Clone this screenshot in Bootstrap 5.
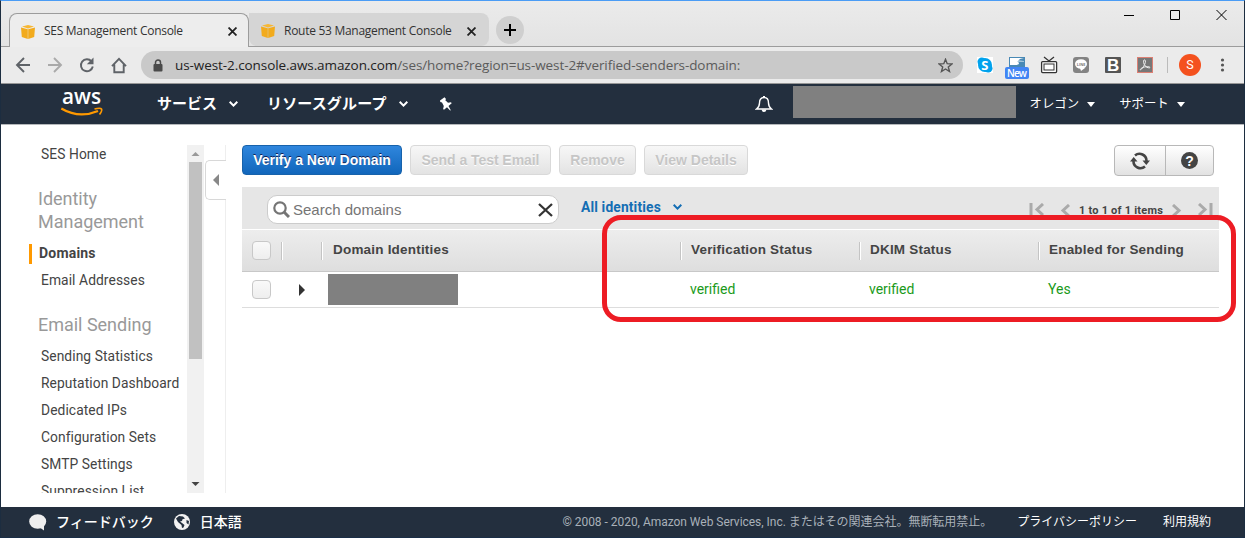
<!DOCTYPE html>
<html lang="ja">
<head>
<meta charset="utf-8">
<meta name="viewport" content="width=device-width, initial-scale=1">
<title>SES Management Console</title>
<link href="https://cdn.jsdelivr.net/npm/bootstrap@5.3.0/dist/css/bootstrap.min.css" rel="stylesheet">
<style>
body{width:1245px;height:538px;overflow:hidden;background:#fff;font-family:Roboto,"Noto Sans CJK JP",sans-serif;font-size:14px;color:#444;line-height:1.2;white-space:nowrap}
svg{display:block;flex:none}
.window{height:538px;border:1px solid #1c2d40;border-top-color:#4a9cf5;border-bottom-color:#1a2e47}
.seg{font-family:"Open Sans","Noto Sans",sans-serif}
.strip{height:46px;background:linear-gradient(#ebebeb,#e3e3e3);border-bottom:1px solid #9c9c9c;padding:12px 0 0 8px}
.tab{height:34px;width:240px;font-size:12px;color:#333;padding:0 11px 0 11px}
.tab.on{background:#ededed;border:1px solid #9c9c9c;border-bottom:0;border-radius:8px 8px 0 0;z-index:1;margin-bottom:-1px;padding-top:2px}
.tab.off{background:#d5d5d5;border-radius:0 8px 8px 8px;height:33px;padding-top:3px;padding-left:12px}
.newtab{width:28px;height:28px;background:#cfcfcf;margin:3px 0 0 7px}
.tools{height:37px;background:#ebebeb;border-bottom:1px solid #969696;padding-left:14px}
.omni{width:822px;height:28px;background:#c9c9c9;border-radius:14px;margin-left:13px;padding:0 10px 0 12px;font-size:13.500px;color:#222}
.omni .path{color:#5b5b5b}
.awsnav{height:41px;background:#232f3e;border-bottom:1px solid #b5b8bb;color:#fff}
.awsnav .big{font-size:15px;font-weight:700}
.masked{background:#808080}
.body{height:382px}
.side{width:158px;height:348px;overflow:hidden;margin-top:20px;margin-left:28px;padding-left:12px}
.side a{display:block;height:27px;line-height:27px;color:#444;text-decoration:none;font-size:13.800px;letter-spacing:.08px}
.side h2{font-size:18px;line-height:23px;color:#999;font-weight:400;margin:0 0 0 -3px;letter-spacing:-.02px}
.side a.cur{font-weight:700;margin-left:-12px;padding-left:10px;background:linear-gradient(#f90,#f90) 0 4px/3px 20px no-repeat;font-size:14px;letter-spacing:.2px}
.sbar{width:17px;height:348px;margin-top:20px;background:#f1f1f1}
.thumb{width:13px;height:197px;background:#c1c1c1}
.gutter{width:22px;height:348px;margin-top:20px;border-right:1px solid #eee}
.toggle{width:21px;height:40px;margin:15px 0 0 1px;border:1px solid #d8d8d8;border-right:0;border-radius:5px 0 0 5px;background:#fff}
.main{width:977px;margin:20px 0 0 16px;font-family:"Liberation Sans",sans-serif}
.abtn{height:30px;border:1px solid #d9d9d9;border-radius:4px;background:linear-gradient(#f7f7f7,#e3e3e3);color:#c6c6c6;font-weight:700;font-size:14px;padding:0;text-shadow:0 1px #fff;line-height:28px}
.abtn.pri{background:linear-gradient(#2f86dd,#1166bb);border-color:#1762ab;color:#fff;text-shadow:0 -1px #125}
.tgroup{width:100px;height:31px;border:1px solid #b8b8b8;border-radius:4px;background:linear-gradient(#fff,#e2e2e2);margin-right:5px}
.filter{height:43px;background:#e6e6e6;border-bottom:1px solid #fff;margin-top:11px}
.sbox{width:292px;height:29px;margin:8px 0 0 25px;background:#fff;border:1px solid #ccc;border-radius:10px;font-size:15px;color:#757575;padding:0 5px}
.ghead{height:42px;background:linear-gradient(#ededed,#dedede);border-bottom:1px solid #c8c8c8;font-weight:700;font-size:13.500px;color:#444;letter-spacing:.2px}
.ghead span{padding-bottom:1px}
.ghead .sep{width:2px;height:18px;border-left:1px solid #c4c4c4;border-right:1px solid #fff}
.grow{height:36px;border-bottom:1px solid #ddd;font-family:Roboto,sans-serif;color:#1a9a1a;font-size:14px}
.cbx{width:19px;height:19px;border:1px solid #c8c8c8;border-radius:4px;background:linear-gradient(#f9f9f9,#eee);margin-left:10px}
.w179{width:179px}
.pager{font:700 11px Roboto,sans-serif;color:#444}
.foot{height:30px;background:#232f3e;color:#fff;font-size:13px}
.foot .copy{color:#a9b1b9;font-size:12px;letter-spacing:-.03px}
.callout{position:absolute;left:602px;top:215px;width:634px;height:107px;border:5px solid #ed1c24;border-radius:19px}
</style>
</head>
<body>
<svg width="0" height="0" style="position:absolute">
<symbol id="cube" viewBox="0 0 14 14"><path d="M0 2.600 6.800 4.200V14L.8 12zM14 2.600 7.200 4.200V14L13.200 12z" fill="#f2ab1d"/><path d="M1 1.600 7 0l6 1.600L7 3.400z" fill="#f7b733"/></symbol>
<symbol id="ex" viewBox="0 0 8 8"><path d="m.5.5 7 7m0-7-7 7" stroke="#222" stroke-width="1.600"/></symbol>
<symbol id="chev" viewBox="0 0 9 6"><path d="m.7.8 3.800 3.800L8.300.8" fill="none" stroke="currentColor" stroke-width="2"/></symbol>
<symbol id="pg" viewBox="0 0 10 13"><path d="M9 1 3 6.500l6 5.500" fill="none" stroke="#aaa" stroke-width="3"/></symbol>
</svg>
<div class="window d-flex flex-column">
<div class="strip d-flex align-items-start seg">
  <div class="tab on d-flex align-items-center position-relative"><svg width="14" height="14"><use href="#cube"/></svg><span style="margin-left:9px;letter-spacing:-.29px">SES Management Console</span><svg class="ms-auto" width="9" height="9"><use href="#ex"/></svg></div>
  <div class="tab off d-flex align-items-center"><svg width="14" height="14"><use href="#cube"/></svg><span style="margin-left:9px;letter-spacing:-.28px">Route 53 Management Console</span><svg class="ms-auto" width="9" height="9" style="margin-right:2px"><use href="#ex"/></svg></div>
  <div class="newtab rounded-circle d-flex align-items-center justify-content-center"><svg width="12" height="12"><path d="M6 0v12M0 6h12" stroke="#000" stroke-width="2"/></svg></div>
  <svg class="ms-auto" width="103" height="12" style="margin:-4px 17px 0 0" fill="none" stroke="#000"><path d="M0 6.500h10M46.500 1.500h9v9h-9zM92.500 1l10 10m0-10-10 10"/></svg>
</div>
<div class="tools d-flex align-items-center seg">
  <svg width="113" height="18" fill="none" stroke-width="1.900"><path d="M15 9H2m7-7L2 9l7 7" stroke="#5f6368"/><path d="M33 9h13m-7-7 7 7-7 7" stroke="#aaa"/><path d="M76.500 5.300A6 6 0 1 0 77.800 10.500" stroke="#5f6368"/><path d="M78.500 1.500v6.700h-6.700z" fill="#5f6368"/><path d="M97 10.200 104 2.800l7 7.400M99.300 8.500v7.700h9.400V8.500" stroke="#5f6368"/></svg>
  <div class="omni d-flex align-items-center"><svg width="10" height="13"><rect y="5" x="0.500" width="9" height="7.500" rx="1" fill="#4a4a4a"/><path d="M2.500 6V3.500a2.500 2.500 0 0 1 5 0V6" fill="none" stroke="#4a4a4a" stroke-width="1.500"/></svg><span style="margin-left:12px;letter-spacing:-.08px">us-west-2.console.aws.amazon.com<span class="path">/ses/home?region=us-west-2#verified-senders-domain:</span></span><svg class="ms-auto" width="15" height="15" viewBox="0 0 15 15"><path d="m7.500 1.300 1.700 4.400 4.800.3-3.700 3 1.200 4.500-4-2.500-4 2.500L4.700 9 1 6l4.800-.3z" fill="none" stroke="#555" stroke-width="1.400"/></svg></div>
  <svg width="262" height="36" viewBox="963 47 262 36" class="seg">
    <rect x="977" y="57" width="16" height="16" fill="#fff"/><circle cx="981.800" cy="61.800" r="4.300" fill="#00a2ed"/><circle cx="988.200" cy="68.200" r="4.300" fill="#00a2ed"/><circle cx="985" cy="65" r="7" fill="#00a2ed"/><text x="981.200" y="69.700" font-size="13" font-weight="700" fill="#fff">S</text>
    <rect x="1009.500" y="57.500" width="15" height="12" fill="#fff" stroke="#4989b5"/><path d="M1010 65h5q4 0 4-1.500t-2-2h7.500V70h-14.500zM1018 60.500q2-2.500 6-2.500v3z" fill="#4989b5"/><rect x="1005" y="67" width="24" height="12" rx="2" fill="#4285f4"/><text x="1007" y="76.700" font-size="10" font-weight="600" fill="#fff" textLength="20">New</text>
    <path d="m1044 57 5 4 5-4" fill="none" stroke="#333" stroke-width="1.300"/><rect x="1041.600" y="61.600" width="15" height="11" rx="1" fill="#fff" stroke="#333" stroke-width="1.300"/><rect x="1044" y="64" width="10" height="6" fill="#fff" stroke="#333"/>
    <rect x="1073" y="57" width="16" height="16" rx="3" fill="#838383"/><ellipse cx="1081" cy="64" rx="6" ry="4.800" fill="#fff"/><path d="M1080 68h5l-4 3z" fill="#fff"/><text x="1076.800" y="65.600" font-size="3.800" font-weight="700" fill="#777">LINE</text>
    <rect x="1105" y="57" width="16" height="16" rx="1" fill="#555"/><text x="1107" y="71" font-size="17" font-weight="700" fill="#fff" font-family="Liberation Sans">B</text>
    <rect x="1137.500" y="57.500" width="15" height="15" fill="#777" stroke="#dc7f73"/><path d="M1144 60c2-1 2 3-.5 6.500-2 3.500-4 4-3 2.500 1.500-2 7-3 9-2s-2 1.500-4-.8c-2-2-2.500-5.200-1.500-6.200z" fill="none" stroke="#eee"/>
    <path d="M1167.500 57v16" stroke="#bbb"/><circle cx="1190" cy="65" r="11" fill="#f4511e"/><text x="1186.300" y="69.300" font-size="12.500" fill="#fff" font-family="Roboto">S</text>
    <g fill="#555"><circle cx="1222.500" cy="60" r="1.600"/><circle cx="1222.500" cy="65" r="1.600"/><circle cx="1222.500" cy="70" r="1.600"/></g>
  </svg>
</div>
<nav class="awsnav d-flex align-items-center">
  <svg width="44" height="38" viewBox="60 85 44 38" style="margin-left:59px"><text x="62" y="103.500" font-family="Open Sans" font-size="21" font-weight="600" fill="#fff" textLength="39" lengthAdjust="spacingAndGlyphs">aws</text><path d="M61.300 108.500Q79 119 98 111" fill="none" stroke="#f90" stroke-width="2.200"/><path d="M94.500 109q6-1.500 7 0t-2 5.500" fill="none" stroke="#f90" stroke-width="1.700"/></svg>
  <span class="big" style="margin-left:53px">サービス</span><svg width="9" height="6" style="margin-left:12px"><use href="#chev"/></svg>
  <span class="big" style="margin-left:29px;letter-spacing:.15px">リソースグループ</span><svg width="9" height="6" style="margin-left:12px"><use href="#chev"/></svg>
  <svg width="14" height="14" viewBox="0 0 14 14" style="margin-left:31px"><path d="M1 3.500 5.500.300 7 2 6.300 3.300 9 5.700l3-.5.700 1.100-3.200 2.800 2.300 4.200-.7.200L8 10.300l-3 2.500-.9-.7.700-3.200L3 5.500 1.300 5z" fill="#fff"/></svg>
  <svg width="18" height="18" viewBox="0 0 18 18" style="margin-left:302px"><path d="M9 2.500c-3.500 0-4.500 2.500-4.500 5.500 0 3-1 4.500-3 6h15c-2-1.500-3-3-3-6 0-3-1-5.500-4.500-5.500z" fill="none" stroke="#fff" stroke-width="1.400"/><path d="M8 1h2v2H8zM6.500 14.500h5q-.5 2.500-2.500 2.500t-2.500-2.500z" fill="#fff"/></svg>
  <div class="masked" style="width:223px;height:32px;margin:-4px 0 0 20px"></div>
  <span style="margin-left:14px;font-size:12.400px">オレゴン</span><svg width="8" height="5" style="margin-left:8px"><path d="M0 0h8L4 5z" fill="#fff"/></svg>
  <span style="margin-left:24px;font-size:12.400px">サポート</span><svg width="8" height="5" style="margin-left:8px"><path d="M0 0h8L4 5z" fill="#fff"/></svg>
</nav>
<div class="body d-flex">
  <div class="side">
    <a style="height:42px;line-height:19px">SES Home</a>
    <h2>Identity<br>Management</h2>
    <a class="cur" style="margin-top:7px">Domains</a><a>Email Addresses</a>
    <h2 style="margin-top:19px;margin-bottom:7px">Email Sending</h2>
    <a>Sending Statistics</a><a>Reputation Dashboard</a><a>Dedicated IPs</a><a>Configuration Sets</a><a>SMTP Settings</a><a>Suppression List</a>
  </div>
  <div class="sbar d-flex flex-column align-items-center"><svg width="17" height="17"><path d="M4.500 11 8.500 7l4 4z" fill="#999"/></svg><div class="thumb"></div><svg class="mt-auto" width="17" height="17"><path d="m4.500 6 4 4 4-4z" fill="#444"/></svg></div>
  <div class="gutter"><div class="toggle d-flex align-items-center"><svg width="6" height="12" style="margin-left:7px"><path d="M6 0v12L0 6z" fill="#888"/></svg></div></div>
  <div class="main">
    <div class="d-flex">
      <button class="btn abtn pri" style="width:160px">Verify a New Domain</button>
      <button class="btn abtn ms-2" style="width:141px;letter-spacing:-.05px">Send a Test Email</button>
      <button class="btn abtn ms-2" style="width:77px">Remove</button>
      <button class="btn abtn ms-2" style="width:104px">View Details</button>
      <div class="tgroup d-flex ms-auto"><div class="d-flex align-items-center justify-content-center border-end" style="width:51px;border-color:#b8b8b8!important"><svg width="20" height="18" viewBox="0 0 20 18" fill="none" stroke="#444" stroke-width="2.600"><path d="M5 3.500A7 7 0 0 1 16.500 9M15 14.500A7 7 0 0 1 3.500 9"/><path d="M12.500 8.500h7.500l-3.700 4.500zM0 9.500h7.500L3.700 5z" fill="#444" stroke="none"/></svg></div>
      <div class="d-flex align-items-center justify-content-center flex-fill"><svg width="17" height="17"><circle cx="8.500" cy="8.500" r="8.500" fill="#444"/><text x="4.200" y="13.500" font-size="14" font-weight="700" fill="#fff">?</text></svg></div></div>
    </div>
    <div class="filter d-flex align-items-start">
      <div class="sbox d-flex align-items-center"><svg width="17" height="17"><circle cx="7" cy="7" r="5.700" fill="none" stroke="#757575" stroke-width="2.200"/><path d="m11 11 5 5" stroke="#757575" stroke-width="3"/></svg><span style="margin-left:3px">Search domains</span><svg class="ms-auto" width="15" height="14"><path d="m1 1 13 12m0-12L1 13" stroke="#333" stroke-width="2.300"/></svg></div>
      <span style="margin:12px 0 0 22px;font:700 13.800px Roboto,sans-serif;letter-spacing:.15px;color:#146eb4">All identities</span><svg width="9" height="6" style="margin:17px 0 0 12px;color:#146eb4"><use href="#chev"/></svg>
      <div class="pager ms-auto d-flex align-items-center" style="margin:16px 6px 0 0"><svg width="15" height="14"><path d="M2 0v14" stroke="#aaa" stroke-width="3"/><use href="#pg" x="5" width="10" height="13"/></svg><svg width="10" height="13" style="margin-left:16px"><use href="#pg"/></svg><span style="margin:0 9px;letter-spacing:.22px">1 to 1 of 1 items</span><svg width="10" height="13" style="transform:scaleX(-1)"><use href="#pg"/></svg><svg width="15" height="14" style="transform:scaleX(-1);margin-left:16px"><path d="M2 0v14" stroke="#aaa" stroke-width="3"/><use href="#pg" x="5" width="10" height="13"/></svg></div>
    </div>
    <div class="ghead d-flex align-items-center"><div class="cbx"></div><i class="sep" style="margin-left:10px"></i><i class="sep" style="margin-left:38px"></i><span style="margin-left:10px;width:347px">Domain Identities</span><i class="sep"></i><span style="padding-left:9px;width:177px">Verification Status</span><i class="sep"></i><span style="padding-left:9px;width:177px">DKIM Status</span><i class="sep"></i><span style="padding-left:9px">Enabled for Sending</span></div>
    <div class="grow d-flex align-items-center"><div class="cbx"></div><svg width="6" height="12" style="margin-left:28px"><path d="M0 0v12l6-6z" fill="#333"/></svg><div class="masked" style="width:130px;height:31px;margin:0 232px 0 23px"></div><span class="w179">verified</span><span class="w179">verified</span><span>Yes</span></div>
  </div>
</div>
<footer class="foot d-flex align-items-center">
  <svg width="18" height="17" style="margin-left:28px"><ellipse cx="8.700" cy="7.500" rx="8.500" ry="7.300" fill="#eee"/><path d="m10 13 5 3.500V11z" fill="#eee"/></svg><span style="margin-left:9px;font-size:14px;font-weight:500">フィードバック</span>
  <svg width="16" height="16" style="margin-left:20px"><circle cx="8" cy="8" r="8" fill="#f2f2f2"/><path d="M2 4.500 5 2l4 .500 2 2-2.500.800L8 7l-2 .5 2 1.500 2.500 2-1 2.500L8 14 7.500 11 4 8zM12.500 6l2.500 1-.5 3.500-2-1.500z" fill="#232f3e"/></svg><span style="margin-left:10px;font-size:14px;font-weight:500">日本語</span>
  <span class="copy ms-auto">© 2008 - 2020, Amazon Web Services, Inc. またはその関連会社。無断転用禁止。</span><span style="margin-left:25px;font-size:12px">プライバシーポリシー</span><span style="margin:0 33px 0 26px;font-size:12px">利用規約</span>
</footer>
</div>
<div class="callout"></div>
</body>
</html>
